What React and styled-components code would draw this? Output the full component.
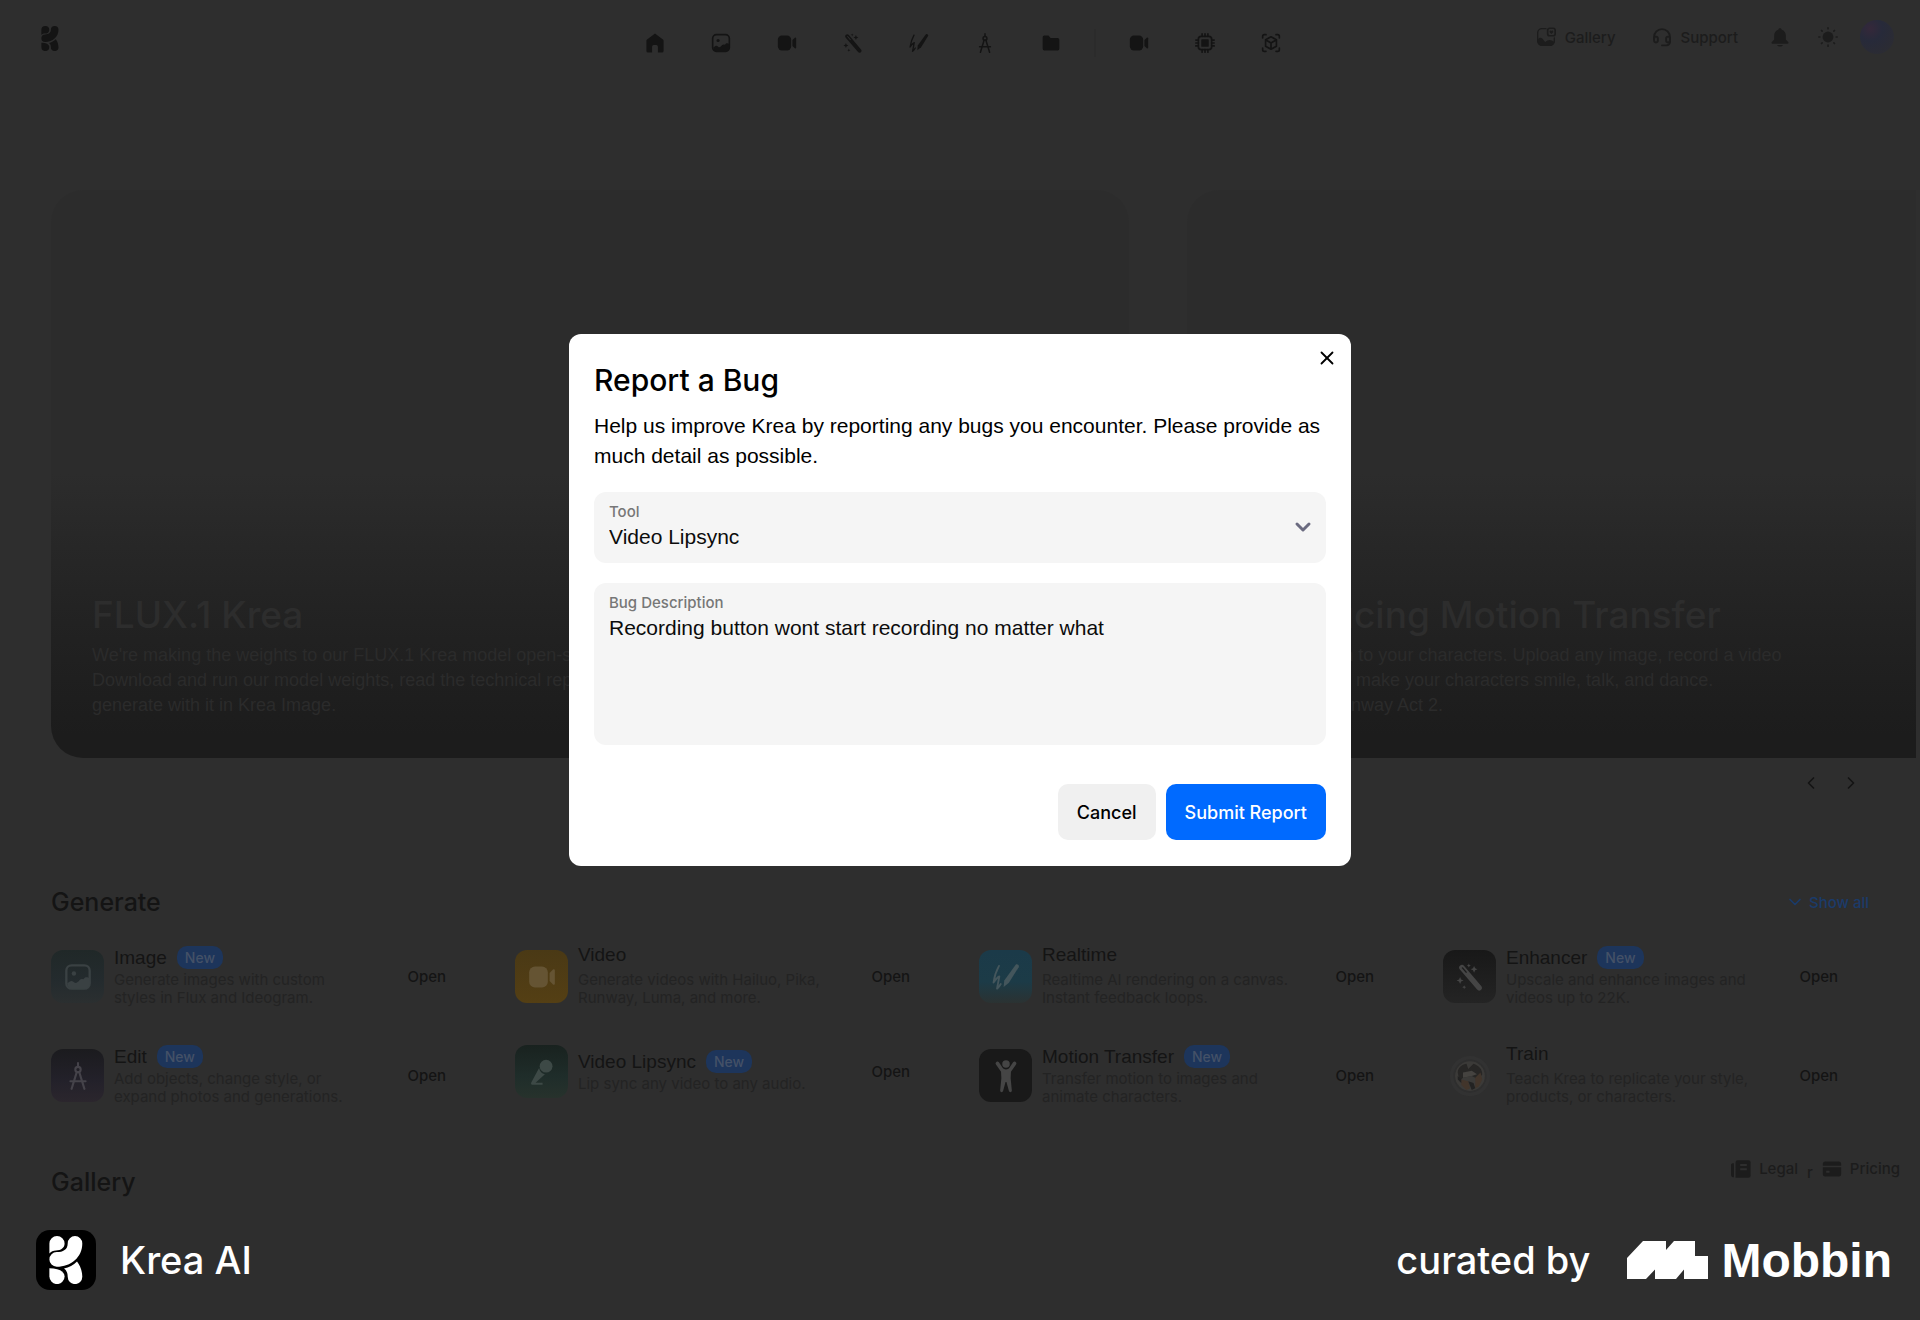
import { useState } from "react";
import styled, { createGlobalStyle, css } from "styled-components";
import { ChevronDown, ChevronLeft, ChevronRight, X } from "lucide-react";

const colors = {
  page: "#2e2e2e",
  ink: "#141414",
  muted: "#1c1c1c",
  faint: "#232323",
  link: "#1b3b6a",
  badge: "#1d355b",
  badgeText: "#445167",
  primary: "#006aff",
  field: "#f5f5f5",
};

const fonts = {
  text: `"Liberation Sans", Arial, sans-serif`,
  ui: `Inter, "Liberation Sans", sans-serif`,
};

const tools = [
  {
    name: "Image",
    isNew: true,
    text: "Generate images with custom styles in Flux and Ideogram.",
    icon: "image",
    tile: "linear-gradient(#202828, #242b2e 60%, #2b2f30)",
    glyph: "#3a4143",
  },
  {
    name: "Video",
    text: "Generate videos with Hailuo, Pika, Runway, Luma, and more.",
    icon: "video",
    tile: "linear-gradient(#4a3915, #543f14)",
    glyph: "#655433",
  },
  {
    name: "Realtime",
    text: "Realtime AI rendering on a canvas. Instant feedback loops.",
    icon: "pen",
    tile: "linear-gradient(#1b3a49, #1c3b47 60%, #2b3232)",
    glyph: "#44565c",
  },
  {
    name: "Enhancer",
    isNew: true,
    text: "Upscale and enhance images and videos up to 22K.",
    icon: "wand",
    tile: "linear-gradient(#181818, #242424)",
    glyph: "#454545",
  },
  {
    name: "Edit",
    isNew: true,
    text: "Add objects, change style, or expand photos and generations.",
    icon: "compass",
    tile: "linear-gradient(#1b1b1e, #23212a 60%, #2b262d)",
    glyph: "#45434a",
  },
  {
    name: "Video Lipsync",
    isNew: true,
    text: "Lip sync any video to any audio.",
    icon: "mic",
    tile: "linear-gradient(#19221f, #1f2d2a 60%, #27322c)",
    glyph: "#3d4946",
  },
  {
    name: "Motion Transfer",
    isNew: true,
    text: "Transfer motion to images and animate characters.",
    icon: "person",
    tile: "#191919",
    glyph: "#454545",
  },
  {
    name: "Train",
    text: "Teach Krea to replicate your style, products, or characters.",
    icon: "train",
    tile: "transparent",
    glyph: "#3a3836",
  },
];

const nav = [
  ["Home", "home"],
  ["Image", "image"],
  ["Video", "video"],
  ["Enhancer", "wand"],
  ["Realtime", "pen"],
  ["Edit", "compass"],
  ["Assets", "folder"],
  null,
  ["Lipsync", "video"],
  ["Train", "chip"],
  ["3D", "cube"],
];

const tileIconSizes = { train: 42, person: 36 };

const line = {
  fill: "none",
  stroke: "currentColor",
  strokeWidth: 2,
  strokeLinecap: "round",
  strokeLinejoin: "round",
};

const drawings = {
  home: (
    <path d="M12 .5 2.500 7.800A2 2 0 0 0 1.700 9.400V21.500a2 2 0 0 0 2 2h4.800v-7a2 2 0 0 1 2-2h3a2 2 0 0 1 2 2v7h4.800a2 2 0 0 0 2-2V9.400a2 2 0 0 0-.8-1.600Z" />
  ),
  image: (
    <>
      <rect x="2" y="2" width="20" height="20" rx="4.500" {...line} />
      <circle cx="8.500" cy="9" r="1.900" />
      <path d="M2.500 17.500 5 15.800c1-.7 2.100-.6 3 .2l1.200 1c1.800.3 3-1 4.200-2.500 1-.9 2.200-.9 3.200-.5l1.400-1.500c1.200-.5 2.700-.5 4 1v4c0 2.500-1.600 4.500-4.100 4.500h-11c-2.200 0-4-1.500-4-4.500Z" />
    </>
  ),
  video: (
    <>
      <rect x="1" y="3" width="16" height="18" rx="5" />
      <path d="M18.500 8.500 21.400 5.600c.6-.6 1.600-.2 1.600.7v11.400c0 .9-1 1.300-1.600.7l-2.900-2.900Z" />
    </>
  ),
  wand: (
    <>
      <path
        fillRule="evenodd"
        d="M3.500 2.200a2.400 2.400 0 0 1 3.500.3l14.600 17.300a2.300 2.300 0 0 1-3.500 3L3.300 5.600a2.400 2.400 0 0 1 .2-3.400Zm1.600 1.600a.6.6 0 0 0 0 .8l3.500 4 .9-.7-3.500-4.100a.6.6 0 0 0-.9 0Z"
      />
      <path d="m15.500 2.500.9 2 2 .9-2 .9-.9 2-.9-2-2-.9 2-.9ZM11 .500l.5 1.200 1.200.5-1.200.5-.5 1.200-.5-1.200-1.200-.5 1.200-.5ZM3.500 12l.9 2.100 2.100.9-2.100.9-.9 2.100-.9-2.100L.5 15l2.100-.9ZM7 19l.5 1.200 1.200.5-1.200.5-.5 1.200-.5-1.200-1.200-.5 1.200-.5Z" />
    </>
  ),
  pen: (
    <>
      <path
        d="M6 2.500C3.500 7 2 12 1.300 16.800c2-3 3.400-4.600 5-5.300L4.300 22c1.400-1.200 2.400-2.500 3.200-4"
        {...line}
        strokeWidth="1.600"
      />
      <path d="M20.300 1.400c1.300-1 3.400.6 2.600 2.200L14.500 17 10 20.600l.5-5.600Z" />
    </>
  ),
  compass: (
    <g {...line} strokeWidth="1.800">
      <path d="M12 1v3M11 8.500 6.500 23M13 8.500 17.500 23M5.500 16.500h13" />
      <circle cx="12" cy="6.500" r="2.300" />
    </g>
  ),
  folder: (
    <path d="M2 5a2 2 0 0 1 2-2h5l2.500 3H20a2 2 0 0 1 2 2v11a2 2 0 0 1-2 2H4a2 2 0 0 1-2-2Z" />
  ),
  chip: (
    <>
      <rect x="4" y="4" width="16" height="16" rx="3.500" {...line} />
      <rect x="7.500" y="7.500" width="9" height="9" rx="1" />
      <path
        d="M8.500 1v3M12 1v3M15.500 1v3M8.500 20v3M12 20v3M15.500 20v3M1 8.500h3M1 12h3M1 15.500h3M20 8.500h3M20 12h3M20 15.500h3"
        {...line}
      />
    </>
  ),
  cube: (
    <g {...line}>
      <path d="M2 6V4a2 2 0 0 1 2-2h2M18 2h2a2 2 0 0 1 2 2v2M22 18v2a2 2 0 0 1-2 2h-2M6 22H4a2 2 0 0 1-2-2v-2" />
      <path d="m12 4.500 6.500 3.700v7.600L12 19.500l-6.500-3.700V8.200ZM5.500 8.200 12 12l6.500-3.800M12 12v7.500" />
    </g>
  ),
  mic: (
    <>
      <circle cx="15.500" cy="7" r="5.500" />
      <path d="M9.500 8.500c.6 3 2.300 4.800 5 5.500l-8 7.200h6v1.800H4c-1.200 0-1.700-1-1.200-2Z" />
    </>
  ),
  person: (
    <>
      <circle cx="12" cy="4" r="2.500" />
      <path d="M5.600 2.600c.6-.5 1.300-.3 1.700.3l2.400 3.600c.6.9 1.300 1.100 2.300 1.100s1.700-.2 2.300-1.100l2.400-3.600c.4-.6 1.100-.8 1.700-.3.600.4.700 1.100.3 1.700L15.300 9.200l-.2 4.300.8 8.200c0 1.300-1.700 1.500-2 .2L12.300 16h-.6l-1.600 5.900c-.3 1.300-2 1.100-2-.2l.8-8.200-.2-4.300L5.300 4.300c-.4-.6-.3-1.300.3-1.700Z" />
    </>
  ),
  train: (
    <>
      <circle
        cx="12"
        cy="12"
        r="10.500"
        fill="none"
        stroke="#323232"
        strokeWidth="2"
      />
      <circle cx="12" cy="12" r="8.500" fill="#3b3a38" />
      <path fill="#272625" d="M5 10c0-3 3-5 5-5l1 3 3-3c3 1 5 3 5 6l-2 3-4-2-5 1-2 2Z" />
      <path fill="#42352b" d="m7 14 4 1 1 4-2 1-3-3ZM15 13l3-3 1 4-2 4-2 1Z" />
      <path fill="#222" d="m11 15 3 1 1 3-2 1ZM5 12l2 2v2l-2-2Z" />
      <path fill="#454340" d="m8 10 5-1 3 2-3 1-5 1Z" />
    </>
  ),
  gallery: (
    <>
      <path
        d="M12 2H7a5 5 0 0 0-5 5v10a5 5 0 0 0 5 5h10a5 5 0 0 0 5-5v-4"
        {...line}
        strokeWidth="1.600"
      />
      <path d="M2 15c2.500-3.500 5-2.500 7 .5l2 2.500c3.500-3.300 7-3.300 11 0-.6 3-2.500 4.800-5 4.800h-10C4 22.800 2 20 2 15Z" />
      <rect x="14" y="1.500" width="9" height="9" rx="2.500" {...line} />
      <path d="M18.500 8.300 16.400 6.200a1.300 1.300 0 0 1 2.100-1.500 1.300 1.300 0 0 1 2.100 1.500Z" />
    </>
  ),
  headset: (
    <g {...line} strokeWidth="2.300">
      <path d="M2.500 14v-2a9.500 9.500 0 0 1 19 0v6a4 4 0 0 1-4 4H12" />
      <rect x="2.500" y="11.500" width="4.500" height="7" rx="2.200" />
      <rect x="17" y="11.500" width="4.500" height="7" rx="2.200" />
    </g>
  ),
  bell: (
    <path d="M12 1.500c1.200 0 2 .8 2 1.800 3.200.9 5 3.600 5 7V15l3 3.200c.5.6.2 1.800-.8 1.800H2.800c-1 0-1.300-1.200-.8-1.800L5 15v-4.700c0-3.400 1.800-6.100 5-7 0-1 .8-1.800 2-1.800ZM8.500 21.500h7c-.6 1.300-1.900 2-3.500 2s-2.900-.7-3.500-2Z" />
  ),
  sun: (
    <>
      <circle cx="12" cy="12" r="6.500" />
      <path
        d="M12 1v1.200M12 21.800V23M1 12h1.200M21.800 12H23M4.200 4.200l.8.8M19 19l.8.800M4.200 19.800 5 19M19 5l.8-.8"
        {...line}
      />
    </>
  ),
  legal: (
    <>
      <path d="M0 7a2 2 0 0 1 2-2h1.500v17A3 3 0 0 1 0 19Z" />
      <path
        fillRule="evenodd"
        d="M5.500 4A2.500 2.500 0 0 1 8 1.500h13A2.500 2.500 0 0 1 23.500 4v16a2.500 2.500 0 0 1-2.500 2.500H5.500ZM11 6v2.500h8V6Zm0 5v2.500h8V11Z"
      />
    </>
  ),
  card: (
    <path
      fillRule="evenodd"
      d="M1 8V6a3 3 0 0 1 3-3h16a3 3 0 0 1 3 3v2ZM1 10h22v8a3 3 0 0 1-3 3H4a3 3 0 0 1-3-3Zm4 4v2.500h4V14Z"
    />
  ),
};

const Icon = ({ name, size = 20 }) => (
  <svg
    width={size}
    height={size}
    viewBox="0 0 24 24"
    fill="currentColor"
    aria-hidden="true"
  >
    {drawings[name]}
  </svg>
);

const KreaMark = ({ width, height }) => (
  <svg
    width={width}
    height={height}
    viewBox="13 6 34 48"
    fill="currentColor"
    aria-hidden="true"
  >
    <path d="M13.400 23.500V13.600a7.600 7.600 0 0 1 15.200 0C28.600 18 25 20.500 20 20.600c-2.700.1-5 1-6.600 2.900Z" />
    <path d="M31.700 13.400a7.300 7.300 0 0 1 14.600 0C46.300 27 35 36.700 20.700 36.700a7.300 7.300 0 0 1 0-14.600c6.300 0 11-2.700 11-8.700Z" />
    <path d="M13.400 38.300c8.500 0 15.200 2.700 15.200 8.200a7.600 7.600 0 0 1-15.200 0Z" />
    <path d="M28 38.600c5-1.100 9.500-3.600 13-7.100 3.500 4.500 5.300 10 5.300 15.300a7.300 7.300 0 0 1-14.600 0c0-3.600-1-6.300-3.700-8.200Z" />
  </svg>
);

export default function App() {
  const [tool, setTool] = useState("Video Lipsync");
  const [text, setText] = useState(
    "Recording button wont start recording no matter what"
  );
  return (
    <>
      <GlobalStyle />
      <Layout>
        <Screen>
          <Header>
            <LogoLink href="#" aria-label="Krea">
              <KreaMark width={18} height={25} />
            </LogoLink>
            <Nav>
              {nav.map((item, i) =>
                item ? (
                  <NavLink key={i} href="#" aria-label={item[0]}>
                    <Icon name={item[1]} />
                  </NavLink>
                ) : (
                  <NavDivider key={i} />
                )
              )}
            </Nav>
            <Account>
              <TopLink href="#">
                <Icon name="gallery" />
                Gallery
              </TopLink>
              <TopLink href="#">
                <Icon name="headset" />
                Support
              </TopLink>
              <RoundButton aria-label="Notifications">
                <Icon name="bell" />
              </RoundButton>
              <RoundButton aria-label="Theme">
                <Icon name="sun" />
              </RoundButton>
              <Avatar />
            </Account>
          </Header>
          <Carousel>
            <Slide>
              <SlideTitle>FLUX.1 Krea</SlideTitle>
              <SlideText>
                We're making the weights to our FLUX.1 Krea model open-source.
                <br />
                Download and run our model weights, read the technical report, or
                <br />
                generate with it in Krea Image.
              </SlideText>
            </Slide>
            <Slide>
              <SlideTitle>Introducing Motion Transfer</SlideTitle>
              <SlideText>
                Transfer motion to your characters. Upload any image, record a
                video
                <br />
                of yourself, and make your characters smile, talk, and dance.
                <br />
                Powered by Runway Act 2.
              </SlideText>
            </Slide>
          </Carousel>
          <Arrows>
            <ArrowButton aria-label="Previous">
              <ChevronLeft size={20} />
            </ArrowButton>
            <ArrowButton aria-label="Next">
              <ChevronRight size={20} />
            </ArrowButton>
          </Arrows>
          <Section>
            <SectionHead>
              <SectionTitle>Generate</SectionTitle>
              <ShowAll>
                <ChevronDown size={20} strokeWidth={2} />
                Show all
              </ShowAll>
            </SectionHead>
            <ToolGrid>
              {tools.map((t) => (
                <ToolItem key={t.name}>
                  <ToolTile $bg={t.tile} $color={t.glyph}>
                    <Icon name={t.icon} size={tileIconSizes[t.icon] || 28} />
                  </ToolTile>
                  <ToolBody>
                    <ToolHead $centered={t.isNew}>
                      <ToolName>{t.name}</ToolName>
                      {t.isNew && <Badge>New</Badge>}
                    </ToolHead>
                    <ToolText>{t.text}</ToolText>
                  </ToolBody>
                  <OpenButton>Open</OpenButton>
                </ToolItem>
              ))}
            </ToolGrid>
          </Section>
          <GallerySection>
            <SectionTitle>Gallery</SectionTitle>
          </GallerySection>
          <CornerLinks>
            <CornerLink href="#">
              <Icon name="legal" />
              Legal
            </CornerLink>
            <CornerMark>r</CornerMark>
            <CornerLink href="#">
              <Icon name="card" />
              Pricing
            </CornerLink>
          </CornerLinks>
          <Backdrop>
            <Modal role="dialog" aria-labelledby="bug-title">
              <CloseButton aria-label="Close">
                <X size={22} />
              </CloseButton>
              <ModalTitle id="bug-title">Report a Bug</ModalTitle>
              <ModalText>
                Help us improve Krea by reporting any bugs you encounter. Please
                provide as much detail as possible.
              </ModalText>
              <Field>
                <Label htmlFor="tool">Tool</Label>
                <Select
                  id="tool"
                  value={tool}
                  onChange={(e) => setTool(e.target.value)}
                >
                  {tools.map((t) => (
                    <option key={t.name}>{t.name}</option>
                  ))}
                </Select>
                <SelectArrow>
                  <ChevronDown size={24} strokeWidth={3} />
                </SelectArrow>
              </Field>
              <Field>
                <Label htmlFor="description">Bug Description</Label>
                <TextArea
                  id="description"
                  value={text}
                  onChange={(e) => setText(e.target.value)}
                />
              </Field>
              <Actions>
                <Button>Cancel</Button>
                <Button $primary>Submit Report</Button>
              </Actions>
            </Modal>
          </Backdrop>
        </Screen>
        <BrandBar>
          <AppBadge>
            <KreaMark width={34} height={48} />
          </AppBadge>
          <BrandText>Krea AI</BrandText>
          <Curated>curated by</Curated>
          <svg width="81" height="38" viewBox="0 0 81 38" fill="#fff">
            <path d="M0 17 16 0h23v9l8-9h21v15h13v23H57v-9.500L49 38H28v-9.500L19 38H0Z" />
          </svg>
          <Wordmark>Mobbin</Wordmark>
        </BrandBar>
      </Layout>
    </>
  );
}

const GlobalStyle = createGlobalStyle`
  * {
    box-sizing: border-box;
  }
  body {
    margin: 0;
    background: ${colors.page};
    font-family: ${fonts.ui};
  }
  h1, h2, h3, p {
    margin: 0;
  }
  a {
    color: inherit;
    text-decoration: none;
  }
  button {
    border: 0;
    padding: 0;
    background: none;
    color: inherit;
    font: inherit;
    cursor: pointer;
  }
  svg {
    display: block;
    flex-shrink: 0;
  }
`;
const Layout = styled.div`
  min-height: 100vh;
  display: flex;
  flex-direction: column;
`;
const Screen = styled.div`
  position: relative;
  flex: 1;
  overflow: hidden;
  color: ${colors.ink};
`;
const Header = styled.header`
  display: grid;
  grid-template-columns: 1fr auto 1fr;
  align-items: start;
  padding: 0 26px 0 32px;
`;
const LogoLink = styled.a`
  display: flex;
  align-items: center;
  height: 77px;
  padding-left: 9px;
`;
const Nav = styled.nav`
  display: flex;
  align-items: center;
  height: 86px;
`;
const NavLink = styled.a`
  width: 66px;
  display: flex;
  justify-content: center;
`;
const NavDivider = styled.span`
  width: 2px;
  height: 28px;
  margin: 0 10px;
  background: #2b2b2b;
`;
const Account = styled.div`
  display: flex;
  align-items: center;
  justify-content: flex-end;
  height: 74px;
  color: ${colors.muted};
`;
const TopLink = styled.a`
  display: flex;
  align-items: center;
  gap: 9px;
  margin-right: 36px;
  font-size: 15px;
  font-weight: 500;
`;
const RoundButton = styled.button`
  width: 48px;
  display: flex;
  justify-content: center;
  &:first-of-type {
    margin-left: -18px;
  }
`;
const Avatar = styled.span`
  width: 34px;
  height: 34px;
  margin-left: 8px;
  border-radius: 50%;
  background: radial-gradient(
    circle at 30% 25%,
    #35283a,
    #272a3a 35%,
    #2a2b35 65%,
    #2d2d31
  );
`;
const Carousel = styled.div`
  display: flex;
  gap: 58px;
  margin: 104px 4px 0 51px;
  overflow: hidden;
`;
const Slide = styled.article`
  flex: 0 0 57.8%;
  aspect-ratio: 1079 / 569;
  display: flex;
  flex-direction: column;
  justify-content: flex-end;
  gap: 4px;
  padding: 0 41px 40px;
  border-radius: 32px;
  background: linear-gradient(#2c2c2c 50%, #222 76%, #1c1c1c 96%);
`;
const SlideTitle = styled.h2`
  color: #2d2d2d;
  font-size: 37px;
  line-height: 48px;
  font-weight: 500;
`;
const SlideText = styled.p`
  color: #2b2b2b;
  font-family: ${fonts.text};
  font-size: 18px;
  line-height: 25px;
  white-space: nowrap;
`;
const Arrows = styled.div`
  display: flex;
  justify-content: flex-end;
  margin: 13px 49px 0;
`;
const ArrowButton = styled.button`
  width: 40px;
  height: 24px;
  display: flex;
  align-items: center;
  justify-content: center;
`;
const Section = styled.section`
  margin: 89px 51px 0;
`;
const GallerySection = styled(Section)`
  margin-top: 58px;
`;
const SectionHead = styled.div`
  display: flex;
  align-items: center;
  justify-content: space-between;
  margin-bottom: 26px;
`;
const SectionTitle = styled.h2`
  font-size: 25px;
  line-height: 36px;
  font-weight: 500;
`;
const ShowAll = styled.button`
  display: flex;
  align-items: center;
  gap: 4px;
  color: ${colors.link};
  font-size: 15px;
  font-weight: 500;
`;
const ToolGrid = styled.div`
  display: grid;
  grid-template-columns: repeat(4, 1fr);
  align-items: start;
  gap: 38px;
`;
const ToolItem = styled.article`
  display: flex;
  align-items: center;
  gap: 10px;
`;
const ToolTile = styled.span`
  width: 53px;
  height: 53px;
  flex-shrink: 0;
  display: flex;
  align-items: center;
  justify-content: center;
  border-radius: 12px;
  background: ${(props) => props.$bg};
  color: ${(props) => props.$color};
`;
const ToolBody = styled.div`
  flex: 1;
`;
const ToolHead = styled.div`
  display: flex;
  align-items: ${(props) => (props.$centered ? "center" : "flex-start")};
  gap: 10px;
  height: 23px;
  margin-bottom: 2px;
`;
const ToolName = styled.h3`
  font-family: ${fonts.text};
  font-size: 19px;
  line-height: 17px;
  font-weight: 500;
`;
const Badge = styled.span`
  padding: 0 8px;
  border-radius: 10px;
  background: ${colors.badge};
  color: ${colors.badgeText};
  font-size: 14px;
  line-height: 23px;
  font-weight: 500;
`;
const ToolText = styled.p`
  max-width: 254px;
  color: ${colors.faint};
  font-size: 15px;
  line-height: 18px;
`;
const OpenButton = styled.button`
  padding: 0 31px 0 20px;
  font-size: 15px;
  font-weight: 500;
`;
const CornerLinks = styled.div`
  position: absolute;
  right: 20px;
  bottom: 21px;
  display: flex;
  align-items: center;
  gap: 9px;
  color: ${colors.muted};
  font-size: 15px;
  line-height: 20px;
  font-weight: 500;
`;
const CornerLink = styled.a`
  display: flex;
  align-items: center;
  gap: 8px;
`;
const CornerMark = styled.span`
  align-self: flex-end;
  line-height: 12px;
`;
const Backdrop = styled.div`
  position: absolute;
  inset: 0;
  display: flex;
  align-items: center;
  justify-content: center;
`;
const Modal = styled.form`
  position: relative;
  width: 782px;
  max-width: 100%;
  padding: 28px 25px 26px;
  border-radius: 12px;
  background: #fff;
  color: #000;
`;
const CloseButton = styled.button.attrs({ type: "button" })`
  position: absolute;
  top: 13px;
  right: 13px;
`;
const ModalTitle = styled.h1`
  margin-bottom: 13px;
  font-size: 30px;
  line-height: 36px;
  font-weight: 500;
`;
const ModalText = styled.p`
  margin-bottom: 21px;
  font-family: ${fonts.text};
  font-size: 21px;
  line-height: 30px;
`;
const Field = styled.div`
  position: relative;
  margin-bottom: 20px;
  padding: 10px 15px 11px;
  border-radius: 12px;
  background: ${colors.field};
`;
const Label = styled.label`
  display: block;
  color: #777;
  font-size: 15px;
  line-height: 20px;
  font-weight: 500;
`;
const control = css`
  display: block;
  width: 100%;
  margin: 0;
  padding: 0;
  border: 0;
  outline: 0;
  background: none;
  color: #0c0c0c;
  font-family: ${fonts.text};
  font-size: 21px;
  line-height: 30px;
`;
const Select = styled.select`
  ${control}
  height: 30px;
  appearance: none;
`;
const TextArea = styled.textarea`
  ${control}
  height: 121px;
  resize: none;
`;
const SelectArrow = styled.span`
  position: absolute;
  top: 23px;
  right: 11px;
  color: #6b6b80;
  pointer-events: none;
`;
const Actions = styled.div`
  display: flex;
  justify-content: flex-end;
  gap: 10px;
  margin-top: 39px;
`;
const Button = styled.button.attrs({ type: "button" })`
  height: 56px;
  padding: 0 19px;
  border-radius: 10px;
  background: ${(props) => (props.$primary ? colors.primary : "#f0f0f0")};
  color: ${(props) => (props.$primary ? "#fff" : "#000")};
  font-size: 18px;
  font-weight: 500;
`;
const BrandBar = styled.footer`
  height: 120px;
  display: flex;
  align-items: center;
  padding: 0 28px 0 36px;
  color: #fff;
`;
const AppBadge = styled.span`
  width: 60px;
  height: 60px;
  display: flex;
  align-items: center;
  justify-content: center;
  border-radius: 14px;
  background: #000;
`;
const BrandText = styled.span`
  margin-left: 24px;
  font-size: 38px;
  font-weight: 500;
`;
const Curated = styled(BrandText)`
  margin-left: auto;
  margin-right: 37px;
`;
const Wordmark = styled.span`
  margin-left: 13px;
  font-family: ${fonts.text};
  font-size: 48px;
  font-weight: 700;
`;
